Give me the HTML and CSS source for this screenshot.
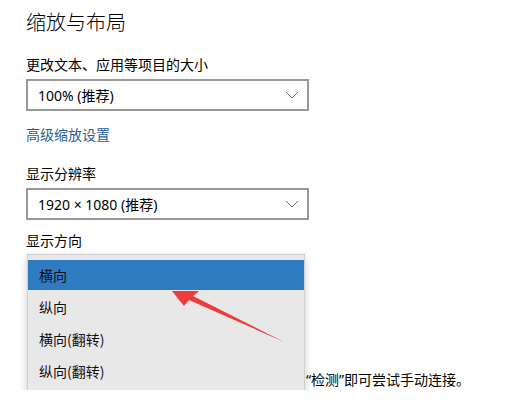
FILE: index.html
```html
<!DOCTYPE html>
<html lang="zh-CN">
<head>
    <meta charset="UTF-8">
    <title>缩放与布局</title>
    <link rel="stylesheet" href="styles.css">
</head>
<body>
    <main class="page">
        <h1 class="title">缩放与布局</h1>

        <p class="label">更改文本、应用等项目的大小</p>
        <div class="select">
            <span>100% (推荐)</span>
            <svg class="chev" width="14" height="8" viewBox="0 0 14 8"><path d="M1 1 L7 7 L13 1" fill="none" stroke="#666" stroke-width="1"/></svg>
        </div>
        <a class="link" href="#">高级缩放设置</a>

        <p class="label gap">显示分辨率</p>
        <div class="select">
            <span>1920 × 1080 (推荐)</span>
            <svg class="chev" width="14" height="8" viewBox="0 0 14 8"><path d="M1 1 L7 7 L13 1" fill="none" stroke="#666" stroke-width="1"/></svg>
        </div>

        <p class="label small-gap">显示方向</p>
        <div class="orient">
            <div class="select ghost"></div>
            <!-- the start of this sentence is hidden under the open menu -->
            <p class="note">“检测”即可尝试手动连接。</p>

            <ul class="menu">
                <li class="active">横向</li>
                <li>纵向</li>
                <li>横向(翻转)</li>
                <li>纵向(翻转)</li>
            </ul>
        </div>
    </main>

    <!-- red annotation arrow -->
    <svg class="arrow" width="516" height="418" viewBox="0 0 516 418">
        <polygon points="172,291 199,291 193,296 284,342 189,300 184,306" fill="#ee3b3b"/>
    </svg>
</body>
</html>
```

FILE: styles.css
```css
body {
    margin: 0;
    background-color: #fff;
    color: #000;
    font-family: "Noto Sans", "Noto Sans CJK SC", sans-serif;
}

.page {
    padding: 8px 0 0 26px;
}

.title {
    font-size: 20px;
    font-weight: 300;
    line-height: 28px;
    margin: 0;
    font-family: "Noto Sans CJK SC", sans-serif;
}

.label {
    font-size: 14px;
    line-height: 20px;
    margin: 18px 0 5px;
    font-family: "Noto Sans CJK SC", sans-serif;
}

.label.gap {
    margin-top: 19px;
}

.label.small-gap {
    margin-top: 10px;
    margin-bottom: 4px;
}

.select {
    height: 28px;
    border: 2px solid #999;
    display: flex;
    align-items: center;
    justify-content: space-between;
    padding: 0 8px 0 10px;
    box-sizing: content-box;
    width: 261px;
    font-size: 14px;
}

.link {
    display: block;
    margin-top: 13px;
    font-size: 14px;
    line-height: 20px;
    color: #1f5f9c;
    text-decoration: none;
    font-family: "Noto Sans CJK SC", sans-serif;
}

.orient {
    position: relative;
}

.ghost {
    visibility: hidden;
}

.note {
    margin: 84px 0 0 280px;
    font-size: 14px;
    line-height: 20px;
    white-space: nowrap;
}

.menu {
    position: absolute;
    top: 0;
    left: 1px;
    width: 276px;
    margin: 0;
    padding: 5px 0 12px;
    list-style: none;
    background-color: #e8e8e8;
    border: 1px solid #d0d0d0;
    box-shadow: 0 3px 8px rgba(0, 0, 0, 0.2);
    font-size: 14px;
    font-family: "Noto Sans CJK SC", sans-serif;
}

.menu li {
    height: 31px;
    line-height: 31px;
    padding-left: 11px;
    margin-bottom: 1px;
    color: #111;
}

.menu li.active {
    background-color: #2f7bc1;
    height: 30px;
    line-height: 30px;
    margin-bottom: 2px;
}

.arrow {
    position: absolute;
    top: 0;
    left: 0;
    pointer-events: none;
}
```
